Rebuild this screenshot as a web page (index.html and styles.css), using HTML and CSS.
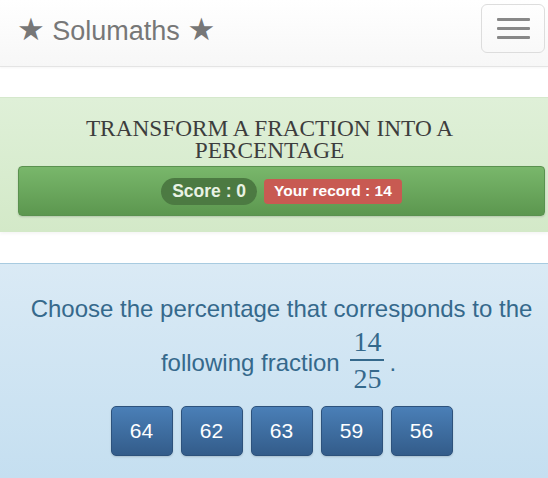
FILE: index.html
```html
<!DOCTYPE html>
<html lang="en">
<head>
<meta charset="utf-8">
<title>Solumaths</title>
<link rel="stylesheet" href="styles.css">
</head>
<body>
<header class="navbar">
  <a class="brand" href="#"><span class="star">★</span> Solumaths <span class="star">★</span></a>
  <button class="toggle" type="button" aria-label="Menu">
    <span class="bar"></span><span class="bar"></span><span class="bar"></span>
  </button>
</header>

<section class="game">
  <h1 class="title">TRANSFORM A FRACTION INTO A PERCENTAGE</h1>
  <div class="scorebar">
    <span class="score">Score : 0</span>
    <span class="record">Your record : 14</span>
  </div>
</section>

<section class="exercise">
  <p class="question">Choose the percentage that corresponds to the following fraction <span class="frac"><span class="num">14</span><span class="line"></span><span class="den">25</span></span><span class="dot">.</span></p>
  <div class="answers">
    <button class="answer" type="button">64</button>
    <button class="answer" type="button">62</button>
    <button class="answer" type="button">63</button>
    <button class="answer" type="button">59</button>
    <button class="answer" type="button">56</button>
  </div>
</section>
</body>
</html>
```

FILE: styles.css
```css
* { box-sizing: border-box; }

html, body {
  margin: 0;
  padding: 0;
  background: #fff;
  font-family: "Liberation Sans", Arial, sans-serif;
}

.navbar {
  height: 67px;
  display: flex;
  align-items: flex-start;
  justify-content: space-between;
  background: linear-gradient(to bottom, #ffffff 0%, #f7f7f7 100%);
  border-bottom: 1px solid #e4e4e4;
  box-shadow: 0 1px 2px rgba(0,0,0,0.04);
}

.brand {
  margin: 12px 0 0 17px;
  font-size: 27px;
  line-height: 34px;
  color: #777;
  text-decoration: none;
}

.star {
  font-family: "DejaVu Sans", sans-serif;
  font-size: 31px;
  line-height: 34px;
}

.toggle {
  margin: 4px 3px 0 0;
  width: 64px;
  height: 49px;
  padding: 0;
  border: 1px solid #ddd;
  border-radius: 6px;
  background: transparent;
  display: flex;
  flex-direction: column;
  align-items: center;
  justify-content: center;
  gap: 6px;
}

.toggle .bar {
  display: block;
  width: 33px;
  height: 3px;
  background: #888;
  border-radius: 1px;
}

.game {
  margin-top: 30px;
  padding: 19px 3px 16px 18px;
  background: linear-gradient(to bottom, #dff0d8 0%, #d3e9c8 100%);
  border-top: 1px solid #d5e8cc;
  box-shadow: 0 2px 3px rgba(0,0,0,0.04);
}

.title {
  margin: 0 0 5px 0;
  padding-right: 24px;
  font-family: "Liberation Serif", "Times New Roman", serif;
  font-weight: normal;
  font-size: 23.3px;
  line-height: 22px;
  color: #3d3d3d;
  text-align: center;
}

.scorebar {
  height: 50px;
  display: flex;
  align-items: center;
  justify-content: center;
  gap: 7px;
  background: linear-gradient(to bottom, #79b76b 0%, #5c974f 100%);
  border: 1px solid #5a914f;
  border-radius: 4px;
  box-shadow: 0 1px 2px rgba(0,0,0,0.15);
}

.score {
  height: 27px;
  padding: 0 11px;
  display: flex;
  align-items: center;
  border-radius: 14px;
  background: #4c7a42;
  color: #e9f2e4;
  font-weight: bold;
  font-size: 17.5px;
}

.record {
  height: 25px;
  padding: 0 10px;
  display: flex;
  align-items: center;
  border-radius: 4px;
  background: #c85a52;
  color: #fff;
  font-weight: bold;
  font-size: 15.5px;
}

.exercise {
  margin-top: 31px;
  padding: 28px 3px 40px 18px;
  background: linear-gradient(to bottom, #daeaf5 0%, #c3def0 100%);
  border-top: 1px solid #a8cbe0;
}

.question {
  margin: 0 0 12px 0;
  font-size: 24px;
  line-height: 34px;
  color: #35698c;
  text-align: center;
}

.frac {
  display: inline-flex;
  flex-direction: column;
  align-items: center;
  vertical-align: 20px;
  margin: 0 2px 0 4px;
  font-family: "Liberation Serif", "Times New Roman", serif;
  font-size: 28px;
  line-height: 31px;
}

.frac .line {
  width: 34px;
  height: 2px;
  background: #35698c;
  margin: 2px 0;
}

.dot {
  margin-left: 3px;
  padding-right: 6px;
}

.answers {
  display: flex;
  justify-content: center;
  gap: 8px;
}

.answer {
  width: 62px;
  height: 50px;
  padding: 0;
  border: 1px solid #2d527c;
  border-radius: 5px;
  background: linear-gradient(to bottom, #4a7fb7 0%, #335c8a 100%);
  color: #fff;
  font-family: "Liberation Sans", Arial, sans-serif;
  font-size: 21px;
  box-shadow: 0 1px 2px rgba(0,0,0,0.15);
}
```
